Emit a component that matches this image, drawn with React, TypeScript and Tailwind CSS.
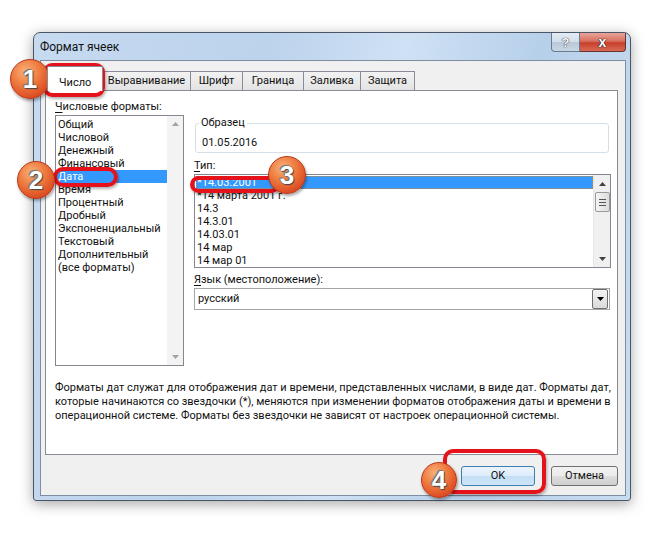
import React from "react";

const formats = [
  "Общий",
  "Числовой",
  "Денежный",
  "Финансовый",
  "Дата",
  "Время",
  "Процентный",
  "Дробный",
  "Экспоненциальный",
  "Текстовый",
  "Дополнительный",
  "(все форматы)",
];

const types = [
  "*14.03.2001",
  "*14 марта 2001 г.",
  "14.3",
  "14.3.01",
  "14.03.01",
  "14 мар",
  "14 мар 01",
];

const tabs = [
  { label: "Выравнивание", w: "w-[89px]" },
  { label: "Шрифт", w: "w-[53px]" },
  { label: "Граница", w: "w-[62px]" },
  { label: "Заливка", w: "w-[58px]" },
  { label: "Защита", w: "w-[55px]" },
];

function Badge({ n, className }: { n: number; className: string }) {
  return (
    <div
      className={
        "absolute rounded-full flex items-center justify-center border border-[#b8361a] bg-[radial-gradient(circle_at_38%_30%,#f9b27a_0%,#ee7a3e_40%,#d9461f_80%,#c23a1a_100%)] shadow-[1px_2px_3px_rgba(0,0,0,0.35)] " +
        className
      }
    >
      <span className="font-['Liberation_Sans'] font-bold text-[26px] leading-none text-white [text-shadow:0_0_1px_#555,1px_1px_1px_#444,-1px_-1px_1px_#777]">
        {n}
      </span>
    </div>
  );
}

function UpArrow({ color }: { color: string }) {
  return (
    <svg width="7" height="4" viewBox="0 0 7 4">
      <path d="M0 4 L3.5 0 L7 4 Z" fill={color} />
    </svg>
  );
}

function DownArrow({ color }: { color: string }) {
  return (
    <svg width="7" height="4" viewBox="0 0 7 4">
      <path d="M0 0 L7 0 L3.5 4 Z" fill={color} />
    </svg>
  );
}

export default function App() {
  return (
    <div className="relative w-[666px] h-[535px] overflow-hidden bg-white font-['Roboto',sans-serif] text-[11px] text-[#111]">
      <div className="pt-[32px] pl-[33px]">
        {/* window frame */}
        <div className="w-[598px] h-[469px] flex flex-col border border-[#4a5566] rounded-t-[7px] rounded-b-[3px] bg-[linear-gradient(100deg,#c6daf0_0%,#bcd3ec_35%,#cfe1f4_55%,#b7d0ea_75%,#c8dcf1_100%)] shadow-[0_3px_14px_rgba(0,0,0,0.35)]">
          {/* title bar */}
          <div className="h-[27px] flex items-start">
            <div className="pl-[6px] pt-[6px] text-[12px] leading-[16px]">Формат ячеек</div>
            <div className="ml-auto mr-[4px] flex">
              <div className="w-[29px] h-[19px] border border-[#6b7a8c] border-t-0 rounded-bl-[4px] bg-[linear-gradient(#e3ebf4_0%,#d3deea_50%,#b8c8d9_51%,#c9d6e4_100%)] flex items-center justify-center">
                <span className="font-['Liberation_Sans'] font-bold text-[13px] leading-none text-[#f4f7fb] [text-shadow:0_0_1px_#333,0_0_1px_#333]">?</span>
              </div>
              <div className="w-[46px] h-[19px] border border-[#6b3030] border-t-0 border-l-0 rounded-br-[4px] bg-[linear-gradient(#e8a59a_0%,#d8705f_45%,#c8402c_55%,#d86a55_100%)] flex items-center justify-center">
                <span className="font-['Liberation_Sans'] font-bold text-[14px] leading-none text-white [text-shadow:0_0_1px_#222,0_0_1px_#222,0_0_1px_#222]">x</span>
              </div>
            </div>
          </div>

          {/* client area */}
          <div className="ml-[6px] w-[586px] h-[436px] border border-[#7d8ea3] bg-[#f0f0f0] flex flex-col">
            {/* tabs */}
            <div className="ml-[6px] mt-[4px] h-[25px] flex items-end">
              <div className="relative z-10 w-[56px] h-[25px] -mb-px bg-white border border-b-0 border-[#898c95] rounded-t-[2px] pl-[11px] pt-[9px] leading-[14px]">
                Число
              </div>
              {tabs.map((t) => (
                <div
                  key={t.label}
                  className={
                    "h-[19px] -ml-px first:ml-0 border border-b-0 border-[#898c95] bg-[linear-gradient(#f2f2f2,#e3e3e3)] flex items-center justify-center leading-[14px] " +
                    t.w
                  }
                >
                  {t.label}
                </div>
              ))}
            </div>

            {/* tab panel */}
            <div className="ml-[4px] w-[573px] h-[365px] bg-white border border-[#898c95] flex flex-col">
              <div className="flex">
                {/* left column */}
                <div className="ml-[9px] w-[129px] pt-[8px] flex flex-col">
                  <div className="h-[16px] leading-[16px]">
                    <span className="underline underline-offset-2">Ч</span>исловые форматы:
                  </div>
                  <div className="h-[251px] border border-[#828790] flex">
                    <div className="flex-1 pt-[2px] pl-[1px]">
                      {formats.map((f) => (
                        <div
                          key={f}
                          className={
                            "h-[13px] leading-[13px] pl-[1px] whitespace-nowrap " +
                            (f === "Дата" ? "bg-[#3399ff] text-white" : "")
                          }
                        >
                          {f}
                        </div>
                      ))}
                    </div>
                    <div className="w-[16px] bg-[#f3f3f3] flex flex-col items-center justify-between py-[6px]">
                      <UpArrow color="#a3a3a3" />
                      <DownArrow color="#a3a3a3" />
                    </div>
                  </div>
                </div>

                {/* right column */}
                <div className="ml-[10px] w-[417px] flex flex-col">
                  <div className="relative mt-[32px] ml-[1px] w-[414px] h-[30px] border border-[#d5dfe5] rounded-[3px]">
                    <div className="absolute -top-[9px] left-[3px] bg-white px-[2px] leading-[16px]">Образец</div>
                    <div className="pl-[6px] pt-[11px] leading-[16px]">01.05.2016</div>
                  </div>

                  <div className="mt-[5px] h-[16px] leading-[16px]">
                    <span className="underline underline-offset-2">Т</span>ип:
                  </div>
                  <div className="h-[94px] border border-[#828790] flex">
                    <div className="flex-1 pt-[1px] pl-[1px]">
                      {types.map((t, i) => (
                        <div
                          key={t}
                          className={
                            "h-[13px] leading-[13px] pl-[1px] whitespace-nowrap " +
                            (i === 0 ? "bg-[#3399ff] text-white outline-1 outline-dotted outline-[#c88a3a] -outline-offset-1" : "")
                          }
                        >
                          {t}
                        </div>
                      ))}
                    </div>
                    <div className="w-[17px] bg-[#f0f0f0] border-l border-[#e6e6e6] flex flex-col items-center pt-[7px] pb-[6px]">
                      <UpArrow color="#404040" />
                      <div className="mt-[6px] w-[15px] h-[20px] border border-[#9a9a9a] rounded-[2px] bg-[linear-gradient(90deg,#f4f4f4,#dcdcdc)] flex flex-col items-center justify-center gap-[2px]">
                        <div className="w-[7px] h-px bg-[#555]" />
                        <div className="w-[7px] h-px bg-[#555]" />
                        <div className="w-[7px] h-px bg-[#555]" />
                      </div>
                      <div className="flex-1" />
                      <DownArrow color="#404040" />
                    </div>
                  </div>

                  <div className="mt-[4px] h-[16px] leading-[16px]">
                    <span className="underline underline-offset-2">Я</span>зык (местоположение):
                  </div>
                  <div className="w-[416px] h-[22px] border border-[#a5a5a5] flex items-center">
                    <div className="flex-1 pl-[3px] leading-[16px]">русский</div>
                    <div className="mr-px w-[16px] h-[20px] border border-[#707070] rounded-[2px] bg-[linear-gradient(#f4f4f4,#dadada)] flex items-center justify-center">
                      <DownArrow color="#000" />
                    </div>
                  </div>
                </div>
              </div>

              <div className="ml-[9px] mt-[15px] leading-[14px] whitespace-nowrap">
                <div>Форматы дат служат для отображения дат и времени, представленных числами, в виде дат. Форматы дат,</div>
                <div>которые начинаются со звездочки (*), меняются при изменении форматов отображения даты и времени в</div>
                <div>операционной системе. Форматы без звездочки не зависят от настроек операционной системы.</div>
              </div>
            </div>

            {/* buttons */}
            <div className="mt-[11px] mr-[7px] flex justify-end gap-[16px]">
              <div className="w-[74px] h-[20px] border border-[#3c7fb1] rounded-[3px] bg-[linear-gradient(#ecf4fb_0%,#dcecfc_50%,#c3def5_51%,#cfe5f8_100%)] flex items-center justify-center leading-[16px]">
                OK
              </div>
              <div className="w-[67px] h-[20px] border border-[#707070] rounded-[3px] bg-[linear-gradient(#f2f2f2_0%,#ebebeb_50%,#dddddd_51%,#cfcfcf_100%)] flex items-center justify-center leading-[16px]">
                Отмена
              </div>
            </div>
          </div>
        </div>
      </div>

      {/* annotations */}
      <div className="absolute left-[43px] top-[63px] w-[62px] h-[34px] border-[4px] border-[#e5121b] rounded-[9px] shadow-[1px_2px_3px_rgba(0,0,0,0.3)]" />
      <div className="absolute left-[53px] top-[167px] w-[65px] h-[20px] border-[4px] border-[#e5121b] rounded-full shadow-[1px_2px_3px_rgba(0,0,0,0.3)]" />
      <div className="absolute left-[190px] top-[176px] w-[90px] h-[17px] border-[4px] border-[#e5121b] rounded-full shadow-[1px_2px_3px_rgba(0,0,0,0.3)]" />
      <div className="absolute left-[443px] top-[449px] w-[103px] h-[45px] border-[4px] border-[#e5121b] rounded-[10px] shadow-[1px_2px_3px_rgba(0,0,0,0.3)]" />

      <Badge n={1} className="left-[10px] top-[59px] w-[40px] h-[40px]" />
      <Badge n={2} className="left-[17px] top-[161px] w-[38px] h-[38px]" />
      <Badge n={3} className="left-[268px] top-[156px] w-[38px] h-[38px]" />
      <Badge n={4} className="left-[421px] top-[462px] w-[36px] h-[36px]" />
    </div>
  );
}
